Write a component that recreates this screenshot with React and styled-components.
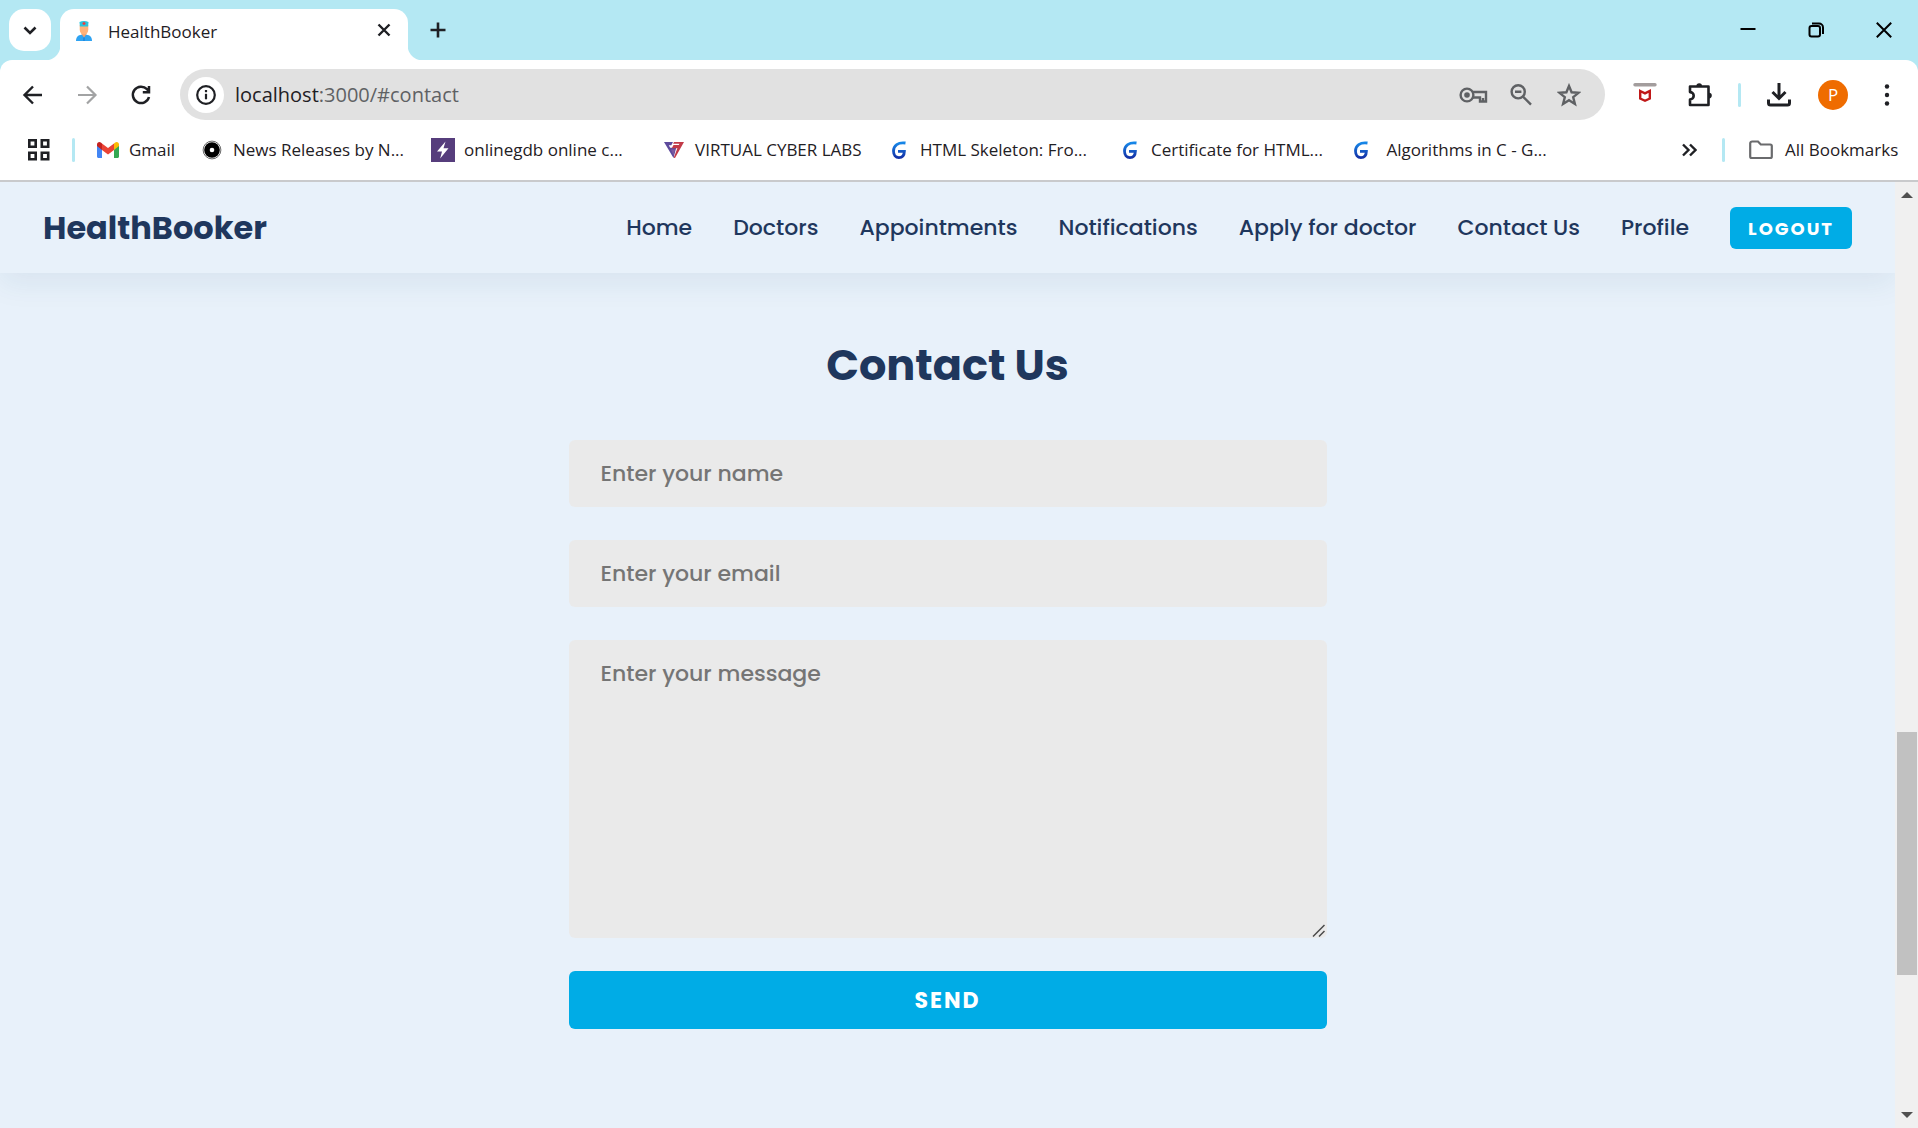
import React from "react";
import styled, { createGlobalStyle } from "styled-components";

const uiFont = '"Segoe UI", "Open Sans", "Noto Sans", sans-serif';
const pageFont = 'Poppins, Inter, "Open Sans", sans-serif';
const navy = "#1f375d";
const accent = "#00ace6";
const frame = "#b4e8f3";

const GlobalStyle = createGlobalStyle`
  *, *::before, *::after { box-sizing: border-box; }
  body { margin: 0; background: ${frame}; }
  button, input, textarea { font: inherit; border: 0; margin: 0; }
  button { padding: 0; background: none; color: inherit; cursor: pointer; }
  svg { display: block; flex: none; }
`;

const Window = styled.div`
  min-height: 100vh;
  display: flex;
  flex-direction: column;
  font-family: ${uiFont};
  color: #1f2024;
`;

/* ---------- tab strip ---------- */

const TabStrip = styled.header`
  display: flex;
  align-items: flex-start;
  height: 60px;
  padding: 9px 0 0 9px;
`;

const TabSearch = styled.button`
  display: grid;
  place-items: center;
  width: 42px;
  height: 42px;
  border-radius: 15px;
  background: #fff;
`;

const Tab = styled.div`
  position: relative;
  display: flex;
  align-items: center;
  width: 348px;
  height: 51px;
  margin-left: 9px;
  padding: 0 14px 9px 12px;
  border-radius: 14px 14px 0 0;
  background: #fff;
  font-size: 17px;
  line-height: 24px;

  &::before,
  &::after {
    content: "";
    position: absolute;
    bottom: 0;
    width: 15px;
    height: 15px;
  }
  &::before {
    right: 100%;
    background: radial-gradient(circle at 0 0, transparent 15px, #fff 16px);
  }
  &::after {
    left: 100%;
    background: radial-gradient(circle at 100% 0, transparent 15px, #fff 16px);
  }
`;

const TabTitle = styled.span`
  flex: 1;
  padding: 3px 0 0 12px;
`;

const SquareButton = styled.button`
  display: grid;
  place-items: center;
  width: ${(p) => p.$size}px;
  height: ${(p) => p.$size}px;
`;

const NewTab = styled(SquareButton)`
  margin-left: 9px;
`;

const WindowControls = styled.div`
  display: flex;
  margin-left: auto;
`;

const WindowButton = styled.button`
  display: grid;
  place-items: center;
  width: 68px;
  height: 42px;
  color: #000;
`;

/* ---------- toolbar ---------- */

const Chrome = styled.div`
  background: #fff;
  border-radius: 12px 12px 0 0;
  border-bottom: 2px solid #c9cacc;
`;

const Toolbar = styled.div`
  display: flex;
  align-items: center;
  padding: 9px 10px 0 12px;
`;

const HistoryButtons = styled.div`
  display: flex;
  gap: 12px;
`;

const AddressBar = styled.div`
  flex: 1;
  display: flex;
  align-items: center;
  height: 51px;
  margin-left: 18px;
  padding: 0 18px 0 8px;
  border-radius: 26px;
  background: #e1e1e1;
  color: #5f6164;
  font-size: 20px;
  line-height: 28px;
`;

const SiteInfo = styled.button`
  display: grid;
  place-items: center;
  width: 36px;
  height: 36px;
  border-radius: 50%;
  background: #fff;
  color: #1f2024;
`;

const Url = styled.span`
  flex: 1;
  padding-left: 11px;
  white-space: nowrap;

  b {
    font-weight: 400;
    color: #1f2024;
  }
`;

const AddressActions = styled.div`
  display: flex;
  gap: 12px;
`;

const Extensions = styled.div`
  display: flex;
  align-items: center;
  gap: 13px;
  margin-left: 19px;
`;

const Divider = styled.span`
  flex: none;
  width: 3px;
  height: 24px;
  border-radius: 2px;
  background: ${frame};
`;

const ToolbarDivider = styled(Divider)`
  margin: 0 4px;
`;

const Avatar = styled.button`
  width: 30px;
  height: 30px;
  border-radius: 50%;
  background: #ef6c00;
  color: #fff;
  font-size: 17px;
  line-height: 30px;
  margin: 0 5px;
`;

/* ---------- bookmarks ---------- */

const BookmarkBar = styled.nav`
  display: flex;
  align-items: center;
  gap: 21px;
  height: 60px;
  padding: 0 20px 0 27px;
  font-size: 17px;
  line-height: 24px;
`;

const BookmarkList = styled.div`
  display: flex;
  gap: 26px;
`;

const Bookmark = styled.a`
  display: flex;
  align-items: center;
  gap: 9px;
  color: inherit;
  text-decoration: none;
`;

const FolderLink = styled(Bookmark)`
  gap: 12px;
`;

const BookmarkLabel = styled.span`
  width: ${(p) => p.$width}px;
  white-space: pre;
`;

const BookmarkEnd = styled.div`
  display: flex;
  align-items: center;
  gap: 24px;
  margin-left: auto;
`;

/* ---------- page ---------- */

const Viewport = styled.div`
  flex: 1;
  display: flex;
`;

const Page = styled.div`
  flex: 1;
  min-width: 0;
  overflow: hidden;
  background: #e8f1fa;
  color: ${navy};
  font-family: ${pageFont};
`;

const SiteNav = styled.nav`
  display: flex;
  align-items: center;
  justify-content: space-between;
  height: 91px;
  padding: 0 43px;
  box-shadow: 0 10px 30px rgba(31, 80, 120, 0.08);
`;

const Brand = styled.a`
  color: inherit;
  text-decoration: none;
  font-size: 32px;
  font-weight: 700;
  line-height: 48px;
`;

const Links = styled.div`
  display: flex;
  align-items: center;
  gap: 41px;
`;

const NavLink = styled.a`
  color: inherit;
  text-decoration: none;
  white-space: nowrap;
  font-size: 22px;
  font-weight: 500;
  line-height: 33px;
`;

const PrimaryButton = styled.button`
  border-radius: 6px;
  background: ${accent};
  color: #fff;
  font-weight: 700;
  letter-spacing: 2px;
`;

const Logout = styled(PrimaryButton)`
  padding: 9px 18px 7px;
  font-size: 18px;
  line-height: 26px;
`;

const Contact = styled.section`
  display: flex;
  flex-direction: column;
  align-items: center;
  padding: 59px 0;
`;

const Title = styled.h2`
  margin: 0 0 42px;
  font-size: 43px;
  font-weight: 700;
  line-height: 66px;
`;

const Form = styled.form`
  display: flex;
  flex-direction: column;
  gap: 33px;
  width: 40%;
`;

const Input = styled.input`
  display: block;
  width: 100%;
  padding: 17px 32px;
  border-radius: 6px;
  background: #eaeaea;
  color: ${navy};
  font-size: 22px;
  font-weight: 500;
  line-height: 33px;
  outline: none;

  &::placeholder {
    color: #757575;
    opacity: 1;
  }
`;

const MessageField = styled.div`
  position: relative;
`;

const Message = styled(Input)`
  resize: vertical;

  &::-webkit-resizer {
    display: none;
  }
`;

const ResizeGrip = styled.svg`
  position: absolute;
  right: 2px;
  bottom: 1px;
  pointer-events: none;
`;

const Send = styled(PrimaryButton)`
  padding: 13px 12px 11px;
  font-size: 22px;
  line-height: 34px;
`;

/* ---------- scrollbar ---------- */

const ScrollTrack = styled.div`
  display: flex;
  flex-direction: column;
  width: 23px;
  padding: 0 1px 0 2px;
  background: #f0f0f0;
`;

const ScrollArrow = styled.span`
  display: grid;
  place-items: center;
  height: 26px;
`;

const ScrollSpace = styled.span`
  flex: ${(p) => p.$part};
`;

const ScrollThumb = styled(ScrollSpace)`
  background: #c1c1c1;
`;

/* ---------- icons ---------- */

const Icon = ({ size = 24, view = 24, w = 2, children }) => (
  <svg
    width={size}
    height={size}
    viewBox={`0 0 ${view} ${view}`}
    fill="none"
    stroke="currentColor"
    strokeWidth={w}
    aria-hidden="true"
  >
    {children}
  </svg>
);

const DoctorIcon = () => (
  <svg width="24" height="24" viewBox="0 0 24 24" aria-hidden="true">
    <path d="M4 23c0-4.500 2.500-6.500 8-6.500s8 2 8 6.500z" fill="#2fa3f2" />
    <path d="M9.500 16l2.500 3.500 2.500-3.500v-3h-5z" fill="#f0a070" />
    <path d="M7.700 7h8.600v4.500c0 3-1.800 5-4.300 5s-4.300-2-4.300-5z" fill="#ffb27a" />
    <path d="M7.500 4c2.500-1.500 6.500-1.500 9 0l-.4 4.500H7.900z" fill="#2cc3dc" />
    <path d="M12 4v3M10.500 5.500h3" stroke="#ee3b3b" strokeWidth="1.300" />
    <path d="M12 19.500V23" stroke="#1577d3" strokeWidth="1" />
  </svg>
);

const GmailIcon = () => (
  <svg width="24" height="24" viewBox="0 0 24 24" aria-hidden="true">
    <path d="M1 6v12.500c0 .8.700 1.500 1.500 1.500H6V10z" fill="#4285f4" />
    <path d="M18 10v10h3.500c.8 0 1.500-.7 1.500-1.500V6z" fill="#34a853" />
    <path d="M18 5.500V12l5-4V6.500C23 4 20.500 3.200 18.800 4.700z" fill="#fbbc04" />
    <path d="M6 12V5.500l6 4.500 6-4.500V12l-6 4.500z" fill="#ea4335" />
    <path d="M1 6.500V8l5 4V5.500l-.8-.8C3.500 3.200 1 4 1 6.500z" fill="#c5221f" />
  </svg>
);

const TargetIcon = () => (
  <svg width="24" height="24" viewBox="0 0 24 24" aria-hidden="true">
    <circle cx="12" cy="12" r="8.900" fill="#fff" stroke="#444" strokeWidth=".8" />
    <circle cx="12" cy="12" r="7.800" fill="#000" />
    <circle cx="12" cy="12" r="2.300" fill="#fff" />
  </svg>
);

const GdbIcon = () => (
  <svg width="24" height="24" viewBox="0 0 24 24" aria-hidden="true">
    <path d="M0 0h24v24H0z" fill="#563d7c" />
    <path d="M14.500 3.500L6 13.500h5L9.200 20.500l8.300-10.300h-5z" fill="#fff" />
  </svg>
);

const CyberIcon = () => (
  <svg width="24" height="24" viewBox="0 0 24 24" aria-hidden="true">
    <path d="M2 4h9l-1.700 3.200H6.800l1.400 2.600h6L11.500 20z" fill="#5d4a9c" />
    <path d="M12 4h10l-9 16-1.300-.3 3.700-9.500H9.800l1.700-3.200h5.300l.7-1.200h-6.400z" fill="#c23a48" />
    <path d="M9 11.500h4l-1.400 6z" fill="#7c5aa0" />
  </svg>
);

const GIcon = () => (
  <svg width="24" height="24" viewBox="0 0 24 24" fill="none" aria-hidden="true">
    <defs>
      <linearGradient id="gBlue" x1="0" y1="0" x2="0" y2="1">
        <stop offset="0" stopColor="#1687e8" />
        <stop offset="1" stopColor="#1432a8" />
      </linearGradient>
    </defs>
    <path
      d="M18.500 5C11 4 6.500 7.500 6.500 13c0 3.900 2.200 6.600 5.400 6.600 3.600 0 5.400-2.600 5.500-6.300h-6.400"
      stroke="url(#gBlue)"
      strokeWidth="2.800"
    />
  </svg>
);

const AppsIcon = () => (
  <Icon w={2.6}>
    <path d="M2.300 2.300h6.400v6.400H2.300zM14.800 2.300h6.400v6.400h-6.400zM2.300 14.800h6.400v6.400H2.300zM14.800 14.800h6.400v6.400h-6.400z" />
  </Icon>
);

const BackIcon = () => (
  <Icon w={2.4}>
    <path d="M21 12H4M12 3.500L3.500 12l8.500 8.500" />
  </Icon>
);

const ForwardIcon = () => (
  <Icon w={2.2}>
    <path d="M3 12H20M12 3.500l8.500 8.500-8.500 8.500" stroke="#a2a3a4" />
  </Icon>
);

const ReloadIcon = () => (
  <Icon w={2.5}>
    <path d="M20 14A8.200 8.200 0 1 1 18 6.200l1.800 2M20 3v6.200h-6.200" />
  </Icon>
);

const InfoIcon = () => (
  <Icon w={2.2}>
    <circle cx="12" cy="12" r="8.800" />
    <path d="M12 10.800v5.500" />
    <path d="M12 7v2.200" />
  </Icon>
);

const KeyIcon = () => (
  <Icon size={30} view={30} w={2.4}>
    <circle cx="9" cy="15" r="6.400" />
    <circle cx="9" cy="15" r="2.800" fill="currentColor" stroke="none" />
    <path d="M14.500 12H28v9.500h-6V17.500h-7M25 18v3" />
  </Icon>
);

const ZoomIcon = () => (
  <Icon w={2.4}>
    <circle cx="9.200" cy="8.800" r="6.600" />
    <path d="M14 13.600l8 8M6 8.800h6.400" />
  </Icon>
);

const StarIcon = () => (
  <Icon w={2.4}>
    <path d="M12 3l2.600 6.300 6.900.5-5.300 4.400 1.700 6.700-5.900-3.700-5.900 3.700 1.700-6.700L2.500 9.800l6.900-.5z" />
  </Icon>
);

const ShieldIcon = () => (
  <svg width="24" height="24" viewBox="0 0 24 24" fill="none" aria-hidden="true">
    <path d="M2 1.800h20" stroke="#a39d9d" strokeWidth="3.400" strokeLinecap="round" />
    <path d="M7.200 8L12 10.300 16.800 8v7.600L12 17.800l-4.800-2.200z" stroke="#c01818" strokeWidth="2.400" />
  </svg>
);

const PuzzleIcon = () => (
  <Icon w={2.6}>
    <path d="M2 3.500h18.500v18.500H2v-5.500a3.700 3.700 0 0 0 0-7.400z" strokeLinejoin="round" />
    <path d="M8.400 3a2.800 2.800 0 0 1 5.600 0zM21 9.800a2.800 2.800 0 0 1 0 5.600z" fill="currentColor" stroke="none" />
  </Icon>
);

const DownloadIcon = () => (
  <Icon w={3}>
    <path d="M12 0v14.500M5.500 9l6.500 6.500L18.500 9M1.500 16.500V20a2 2 0 0 0 2 2h17a2 2 0 0 0 2-2v-3.500" />
  </Icon>
);

const MenuIcon = () => (
  <svg width="24" height="24" viewBox="0 0 24 24" fill="currentColor" aria-hidden="true">
    <circle cx="12" cy="3.500" r="2.200" />
    <circle cx="12" cy="12" r="2.200" />
    <circle cx="12" cy="20.500" r="2.200" />
  </svg>
);

const FolderIcon = () => (
  <Icon w={2.2}>
    <path
      d="M1.200 18.500v-13a2 2 0 0 1 2-2H9l2.800 3h9.500a1.500 1.500 0 0 1 1.500 1.500v10.500a1.500 1.500 0 0 1-1.500 1.500H2.700a1.500 1.500 0 0 1-1.500-1.500z"
      stroke="#6a6b6d"
    />
  </Icon>
);

const bookmarks = [
  { label: "Gmail", width: 45, icon: GmailIcon },
  { label: "News Releases by N...", width: 172, icon: TargetIcon },
  { label: "onlinegdb online c...", width: 172, icon: GdbIcon },
  { label: "VIRTUAL CYBER LABS", width: 166, icon: CyberIcon },
  { label: "HTML Skeleton: Fro...", width: 172, icon: GIcon },
  { label: "Certificate for HTML...", width: 172, icon: GIcon },
  { label: " Algorithms in C - G...", width: 172, icon: GIcon },
];

const links = [
  "Home",
  "Doctors",
  "Appointments",
  "Notifications",
  "Apply for doctor",
  "Contact Us",
  "Profile",
];

export default function App() {
  return (
    <Window>
      <GlobalStyle />
      <TabStrip>
        <TabSearch aria-label="Search tabs">
          <Icon size={18} view={18} w={2.6}>
            <path d="M3.500 6.500L9 12l5.500-5.500" />
          </Icon>
        </TabSearch>
        <Tab>
          <DoctorIcon />
          <TabTitle>HealthBooker</TabTitle>
          <SquareButton $size={20} aria-label="Close tab">
            <Icon size={14} view={14} w={2.4}>
              <path d="M1.500 1.500l11 11M12.500 1.500l-11 11" />
            </Icon>
          </SquareButton>
        </Tab>
        <NewTab $size={42} aria-label="New tab">
          <Icon size={16} view={16} w={2.6}>
            <path d="M8 .5v15M.5 8h15" />
          </Icon>
        </NewTab>
        <WindowControls>
          <WindowButton aria-label="Minimize">
            <Icon size={16} view={16} w={2}>
              <path d="M.5 7h15" />
            </Icon>
          </WindowButton>
          <WindowButton aria-label="Restore">
            <Icon size={16} view={16} w={2}>
              <rect x="1.500" y="4" width="10.500" height="10.500" rx="2" />
              <path d="M4 1.500h7a4 4 0 0 1 4 4V12" />
            </Icon>
          </WindowButton>
          <WindowButton aria-label="Close">
            <Icon size={16} view={16} w={2}>
              <path d="M.8.800l14.400 14.400M15.200.800L.8 15.200" />
            </Icon>
          </WindowButton>
        </WindowControls>
      </TabStrip>

      <Chrome>
        <Toolbar>
          <HistoryButtons>
            <SquareButton $size={42} aria-label="Back"><BackIcon /></SquareButton>
            <SquareButton $size={42} aria-label="Forward"><ForwardIcon /></SquareButton>
            <SquareButton $size={42} aria-label="Reload"><ReloadIcon /></SquareButton>
          </HistoryButtons>
          <AddressBar>
            <SiteInfo aria-label="Site information"><InfoIcon /></SiteInfo>
            <Url><b>localhost</b>:3000/#contact</Url>
            <AddressActions>
              <SquareButton $size={36} aria-label="Passwords"><KeyIcon /></SquareButton>
              <SquareButton $size={36} aria-label="Zoom"><ZoomIcon /></SquareButton>
              <SquareButton $size={36} aria-label="Bookmark this page"><StarIcon /></SquareButton>
            </AddressActions>
          </AddressBar>
          <Extensions>
            <SquareButton $size={42} aria-label="Web protection"><ShieldIcon /></SquareButton>
            <SquareButton $size={42} aria-label="Extensions"><PuzzleIcon /></SquareButton>
            <ToolbarDivider />
            <SquareButton $size={42} aria-label="Downloads"><DownloadIcon /></SquareButton>
            <Avatar aria-label="Profile">P</Avatar>
            <SquareButton $size={42} aria-label="Menu"><MenuIcon /></SquareButton>
          </Extensions>
        </Toolbar>
        <BookmarkBar aria-label="Bookmarks">
          <SquareButton $size={24} aria-label="Apps"><AppsIcon /></SquareButton>
          <Divider />
          <BookmarkList>
            {bookmarks.map(({ label, width, icon: Glyph }, i) => (
              <Bookmark href="#" key={i}>
                <Glyph />
                <BookmarkLabel $width={width}>{label}</BookmarkLabel>
              </Bookmark>
            ))}
          </BookmarkList>
          <BookmarkEnd>
            <SquareButton $size={18} aria-label="More bookmarks">
              <Icon size={16} view={16} w={2.4}>
                <path d="M2 2.500L7.500 8 2 13.500M9 2.500L14.500 8 9 13.500" />
              </Icon>
            </SquareButton>
            <Divider />
            <FolderLink href="#">
              <FolderIcon />
              <BookmarkLabel $width={113}>All Bookmarks</BookmarkLabel>
            </FolderLink>
          </BookmarkEnd>
        </BookmarkBar>
      </Chrome>

      <Viewport>
        <Page>
          <SiteNav>
            <Brand href="#">HealthBooker</Brand>
            <Links>
              {links.map((text) => (
                <NavLink href="#" key={text}>{text}</NavLink>
              ))}
              <Logout>LOGOUT</Logout>
            </Links>
          </SiteNav>
          <Contact id="contact">
            <Title>Contact Us</Title>
            <Form onSubmit={(e) => e.preventDefault()}>
              <Input type="text" aria-label="Name" placeholder="Enter your name" />
              <Input type="email" aria-label="Email" placeholder="Enter your email" />
              <MessageField>
                <Message
                  as="textarea"
                  rows={8}
                  aria-label="Message"
                  placeholder="Enter your message"
                />
                <ResizeGrip width="13" height="13" viewBox="0 0 13 13" aria-hidden="true">
                  <path d="M1 12.500L12.500 1M7 12.500L12.500 7" stroke="#4a4a4a" strokeWidth="1.500" />
                </ResizeGrip>
              </MessageField>
              <Send type="submit">SEND</Send>
            </Form>
          </Contact>
        </Page>
        <ScrollTrack aria-hidden="true">
          <ScrollArrow>
            <svg width="12" height="6" viewBox="0 0 12 6"><path d="M6 0l6 6H0z" fill="#505050" /></svg>
          </ScrollArrow>
          <ScrollSpace $part={524} />
          <ScrollThumb $part={243} />
          <ScrollSpace $part={127} />
          <ScrollArrow>
            <svg width="12" height="6" viewBox="0 0 12 6"><path d="M6 6l6-6H0z" fill="#505050" /></svg>
          </ScrollArrow>
        </ScrollTrack>
      </Viewport>
    </Window>
  );
}
